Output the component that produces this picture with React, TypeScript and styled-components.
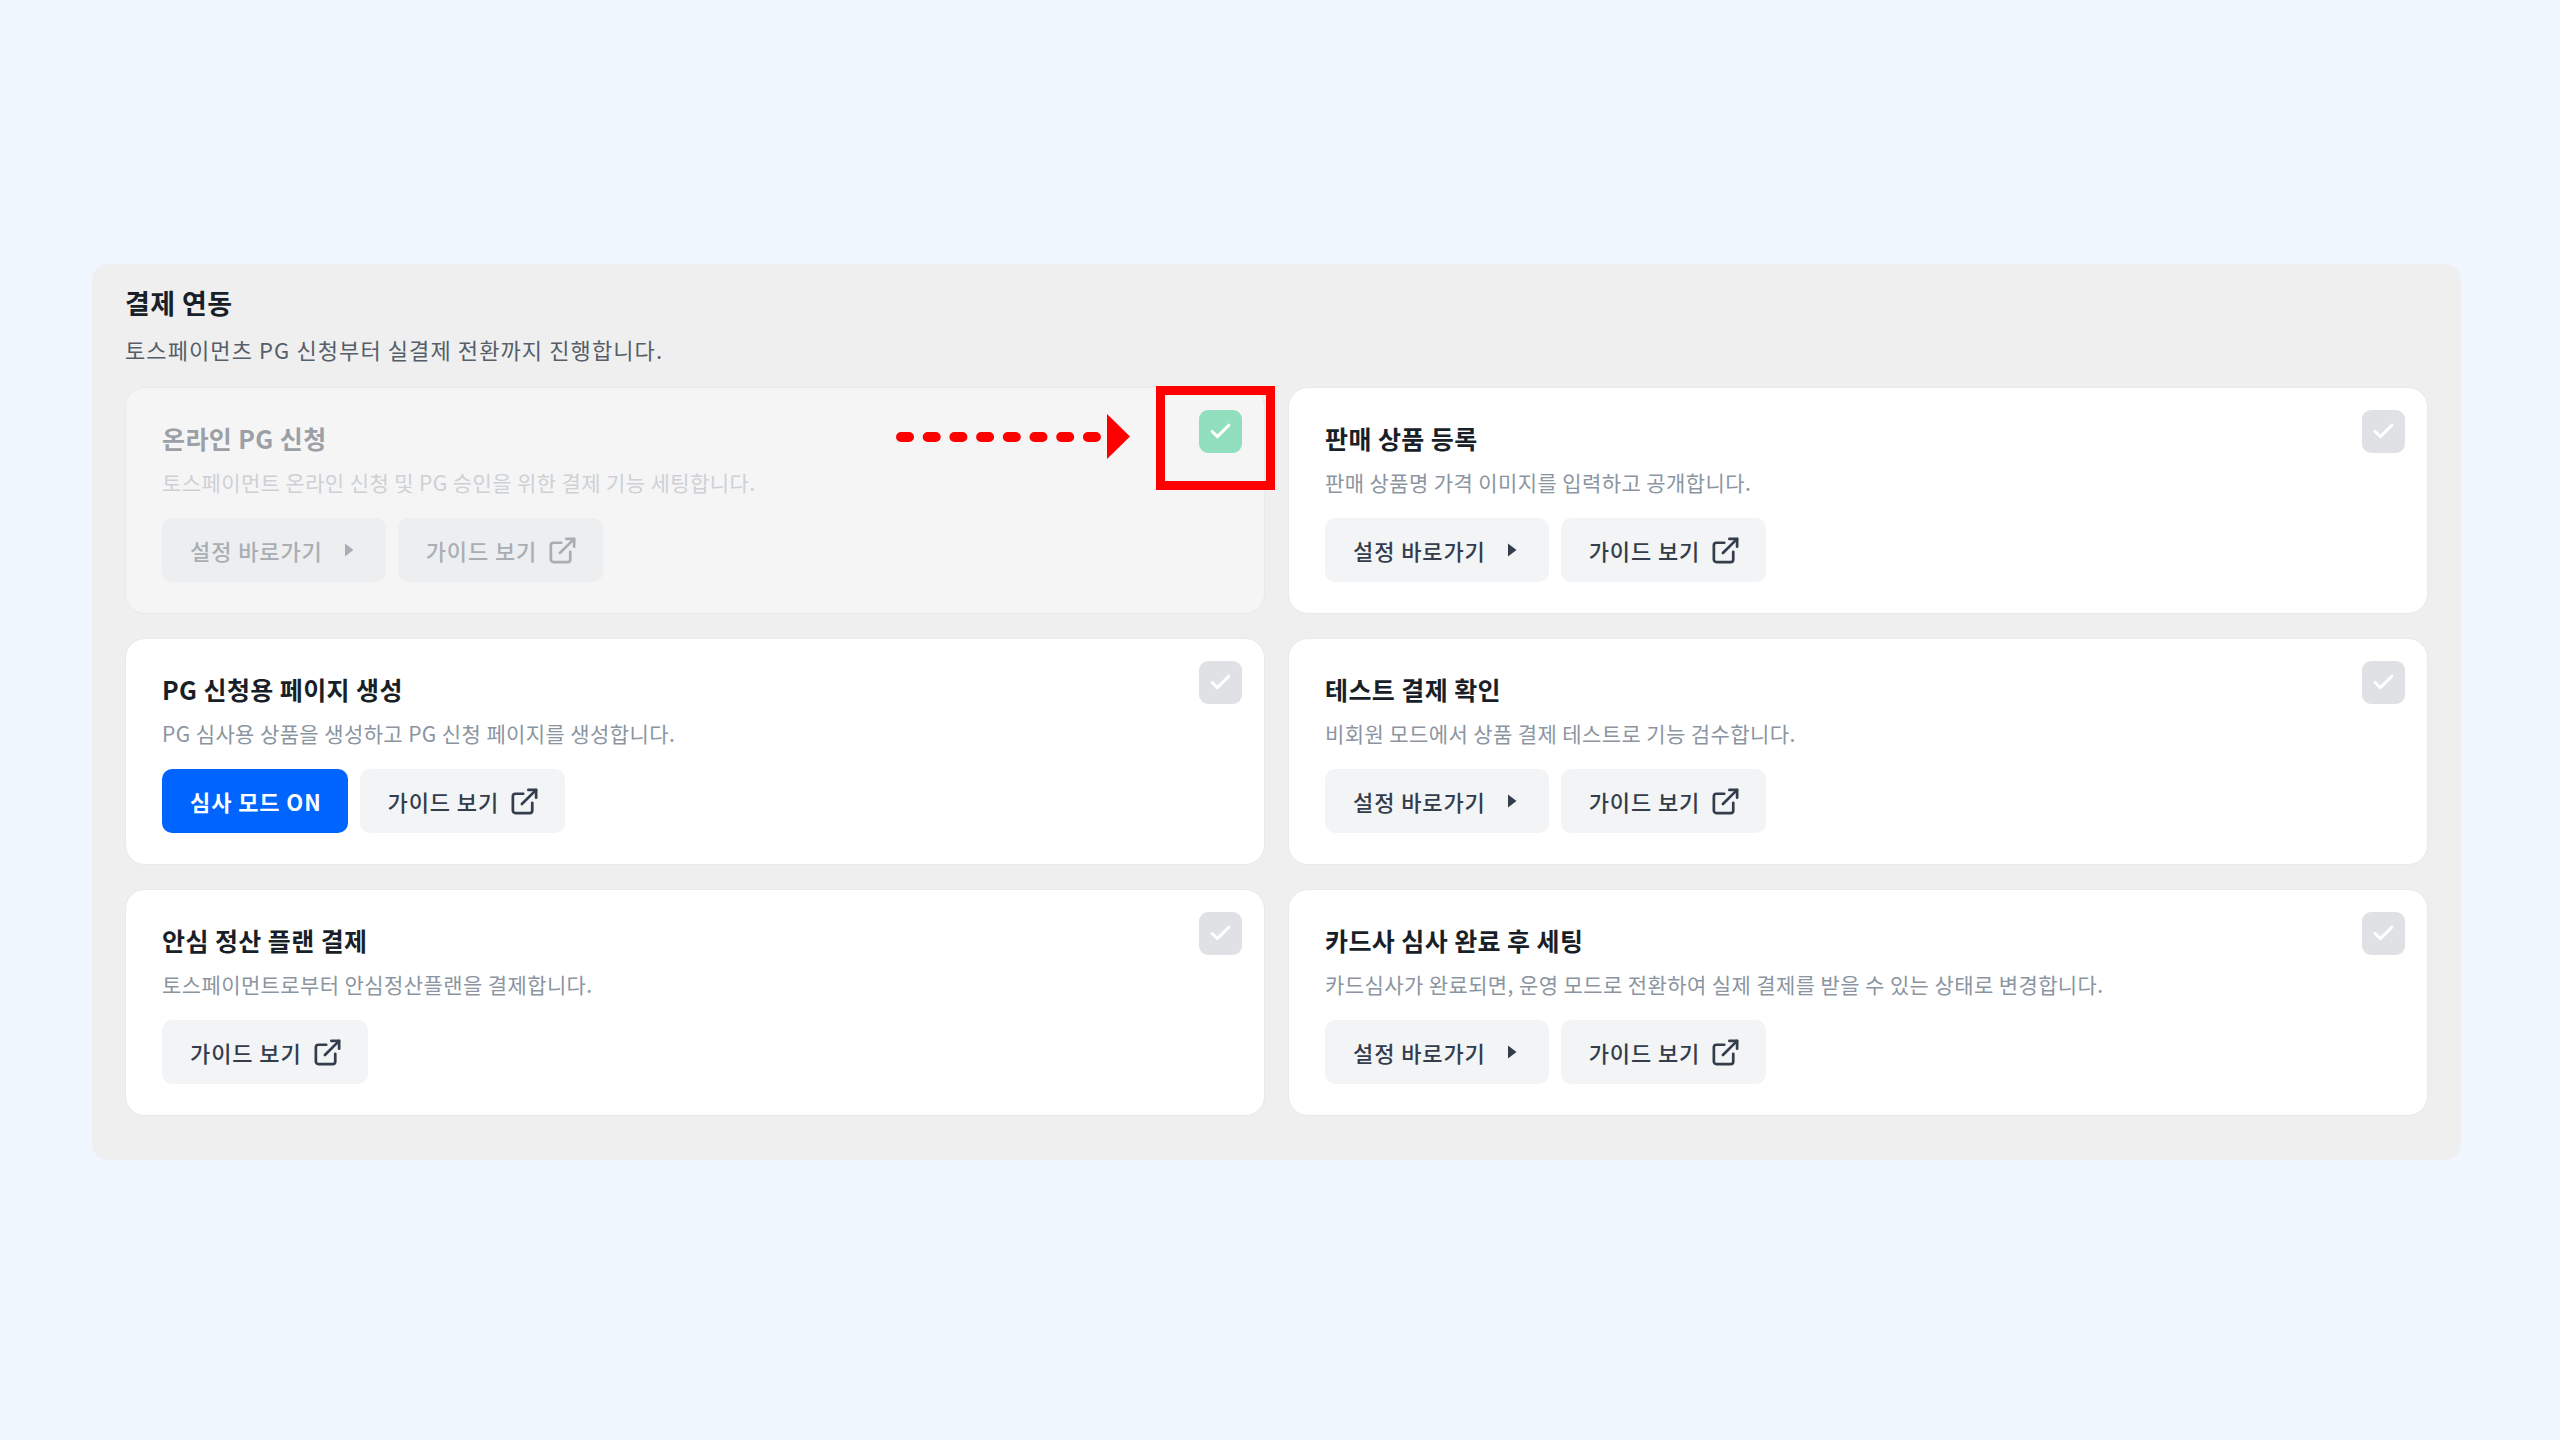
import type { FC } from 'react'
import styled, { createGlobalStyle, css } from 'styled-components'
import { Check, ExternalLink } from 'lucide-react'

const GlobalStyle = createGlobalStyle`
  html,
  body {
    margin: 0;
    padding: 0;
  }

  body {
    font-family: 'Noto Sans CJK KR', 'Noto Sans', sans-serif;
    -webkit-font-smoothing: antialiased;
  }

  * {
    box-sizing: border-box;
  }
`

const Page = styled.div`
  background-color: #eff6fd;
  min-height: 100vh;
  padding: 264px 99px 120px 92px;
`

const Panel = styled.section`
  background-color: #efefef;
  border-radius: 16px;
  padding: 22px 33px 44px;
`

const PanelTitle = styled.h2`
  color: #191f28;
  font-size: 27px;
  font-weight: 700;
  letter-spacing: 0.4px;
  line-height: 34px;
  margin: 0;
`

const PanelText = styled.p`
  color: #555e69;
  font-size: 22px;
  font-weight: 400;
  letter-spacing: 1.1px;
  line-height: 30px;
  margin: 14px 0 0;
`

const Grid = styled.div`
  column-gap: 23px;
  display: grid;
  grid-template-columns: 1fr 1fr;
  margin-top: 23px;
  row-gap: 24px;
`

const Card = styled.div<{ $done?: boolean }>`
  background-color: ${({ $done }) => ($done ? '#f5f5f5' : '#fff')};
  border: 1px solid #e7e9ec;
  border-radius: 20px;
  padding: 34px 36px 31px;
  position: relative;
`

const CardTitle = styled.h3<{ $done?: boolean }>`
  color: ${({ $done }) => ($done ? '#9ba0a6' : '#191f28')};
  font-size: 25px;
  font-weight: 700;
  letter-spacing: 0.4px;
  line-height: 32px;
  margin: 0;
`

const CardText = styled.p<{ $done?: boolean }>`
  color: ${({ $done }) => ($done ? '#cdd1d5' : '#8b95a1')};
  font-size: 21px;
  font-weight: 400;
  letter-spacing: 0.4px;
  line-height: 28px;
  margin: 14px 0 0;
`

const Buttons = styled.div`
  display: flex;
  gap: 12px;
  margin-top: 22px;
`

const Button = styled.button<{ $done?: boolean; $primary?: boolean }>`
  align-items: center;
  background-color: #f2f4f6;
  border: none;
  border-radius: 10px;
  color: #333d4b;
  display: inline-flex;
  font-family: inherit;
  font-size: 22px;
  font-weight: 500;
  gap: 10px;
  height: 64px;
  letter-spacing: 0.9px;
  padding: 0 25px 0 28px;

  ${({ $done }) =>
    $done &&
    css`
      background-color: #edeef0;
      color: #a9aeb4;
    `};

  ${({ $primary }) =>
    $primary &&
    css`
      background-color: #0064ff;
      color: #fff;
      font-weight: 700;
      padding: 0 26px 0 28px;
    `};
`

const Caret = styled.span`
  align-items: center;
  display: inline-flex;
  height: 24px;
  justify-content: center;
  margin-left: 4px;
  width: 24px;
`

const CheckBox = styled.span<{ $done?: boolean }>`
  align-items: center;
  background-color: ${({ $done }) => ($done ? '#91dfbf' : '#dfe1e5')};
  border-radius: 9px;
  color: #fff;
  display: flex;
  height: 43px;
  justify-content: center;
  position: absolute;
  right: 22px;
  top: 22px;
  width: 43px;
`

const Highlight = styled.span`
  border: 9px solid #ff0000;
  height: 104px;
  position: absolute;
  right: -11px;
  top: -2px;
  width: 119px;
`

const Arrow = styled.svg`
  left: 770px;
  position: absolute;
  top: 26px;
`

const SettingsButton: FC<{ done?: boolean }> = ({ done }) => (
  <Button $done={done}>
    설정 바로가기
    <Caret>
      <svg
        width="10"
        height="14"
        viewBox="0 0 10 14"
      >
        <path
          d="M1 0.5 L9.5 7 L1 13.5 Z"
          fill="currentColor"
        />
      </svg>
    </Caret>
  </Button>
)

const GuideButton: FC<{ done?: boolean }> = ({ done }) => (
  <Button $done={done}>
    가이드 보기
    <ExternalLink
      size={31}
      strokeWidth={2.1}
    />
  </Button>
)

interface Step {
  title: string
  text: string
  done?: boolean
  settings?: boolean
  primary?: string
  annotated?: boolean
}

const steps: Step[] = [
  {
    title: '온라인 PG 신청',
    text: '토스페이먼트 온라인 신청 및 PG 승인을 위한 결제 기능 세팅합니다.',
    done: true,
    settings: true,
    annotated: true,
  },
  {
    title: '판매 상품 등록',
    text: '판매 상품명 가격 이미지를 입력하고 공개합니다.',
    settings: true,
  },
  {
    title: 'PG 신청용 페이지 생성',
    text: 'PG 심사용 상품을 생성하고 PG 신청 페이지를 생성합니다.',
    primary: '심사 모드 ON',
  },
  {
    title: '테스트 결제 확인',
    text: '비회원 모드에서 상품 결제 테스트로 기능 검수합니다.',
    settings: true,
  },
  {
    title: '안심 정산 플랜 결제',
    text: '토스페이먼트로부터 안심정산플랜을 결제합니다.',
  },
  {
    title: '카드사 심사 완료 후 세팅',
    text: '카드심사가 완료되면, 운영 모드로 전환하여 실제 결제를 받을 수 있는 상태로 변경합니다.',
    settings: true,
  },
]

// red call-out drawn over the first card
const Annotation: FC = () => (
  <>
    <Arrow
      width="234"
      height="45"
      viewBox="0 0 234 45"
    >
      <line
        x1="5"
        y1="23"
        x2="206"
        y2="23"
        stroke="#ff0000"
        strokeWidth="10"
        strokeLinecap="round"
        strokeDasharray="8 18.7"
      />
      <path
        d="M211 0 L234 22.5 L211 45 Z"
        fill="#ff0000"
      />
    </Arrow>
    <Highlight />
  </>
)

const StepCard: FC<{ step: Step }> = ({ step }) => {
  const { title, text, done, settings, primary, annotated } = step

  return (
    <Card $done={done}>
      <CardTitle $done={done}>{title}</CardTitle>
      <CardText $done={done}>{text}</CardText>
      <Buttons>
        {primary && <Button $primary>{primary}</Button>}
        {settings && <SettingsButton done={done} />}
        <GuideButton done={done} />
      </Buttons>
      <CheckBox $done={done}>
        <Check
          size={25}
          strokeWidth={3}
        />
      </CheckBox>
      {annotated && <Annotation />}
    </Card>
  )
}

const App: FC = () => {
  return (
    <>
      <GlobalStyle />
      <Page>
        <Panel>
          <PanelTitle>결제 연동</PanelTitle>
          <PanelText>토스페이먼츠 PG 신청부터 실결제 전환까지 진행합니다.</PanelText>
          <Grid>
            {steps.map((step) => (
              <StepCard
                key={step.title}
                step={step}
              />
            ))}
          </Grid>
        </Panel>
      </Page>
    </>
  )
}

export default App
